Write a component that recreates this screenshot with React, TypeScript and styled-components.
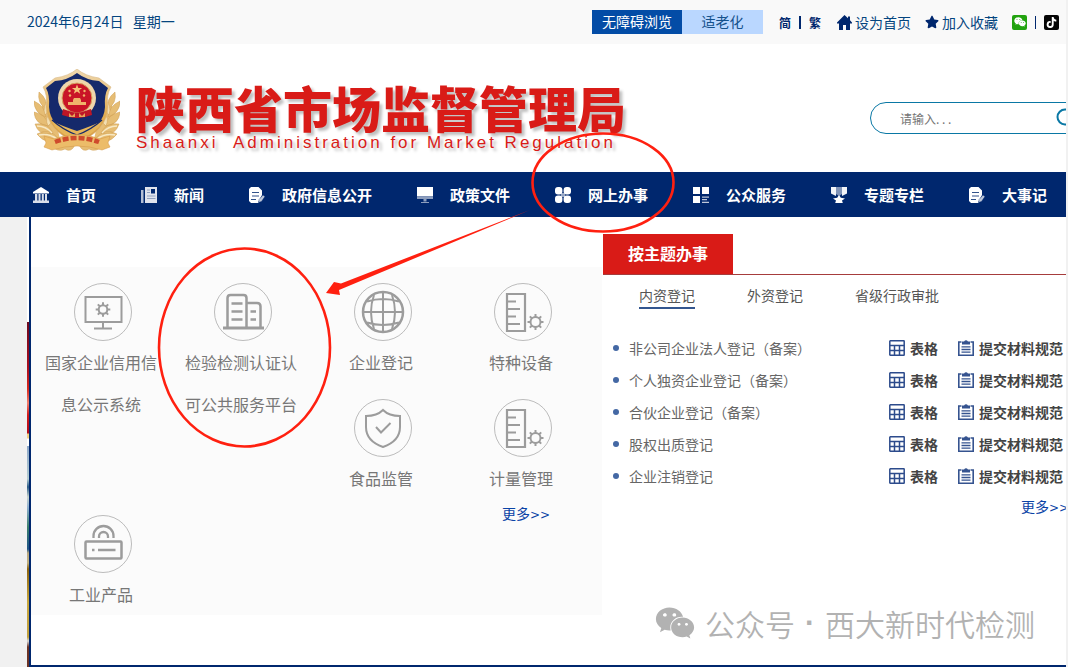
import React from 'react';
import styled, { createGlobalStyle } from 'styled-components';
import { FaStar, FaTiktok, FaWeixin } from 'react-icons/fa';

const navy = '#00276e';
const red = '#d91b17';

const GlobalStyle = createGlobalStyle`
  *, *::before, *::after { box-sizing: border-box; }
  body {
    margin: 0;
    background: #f1f1f1;
    font-family: "Noto Sans CJK SC", "Liberation Sans", sans-serif;
    font-size: 14px;
    color: #666;
  }
  a { color: inherit; text-decoration: none; }
  ul { list-style: none; margin: 0; padding: 0; }
  h1, h2, p { margin: 0; }
  button, input { font-family: inherit; }
  svg { display: block; flex: none; }
`;

const Page = styled.div`
  position: relative;
  margin-right: 2px;
  overflow: hidden;
  background: #fff;
`;

const TopBar = styled.div`
  display: flex;
  align-items: center;
  justify-content: space-between;
  height: 44px;
  padding: 0 7px 0 27px;
  background: #f9f9f9;
  color: #04457f;
  white-space: nowrap;
`;

const DateText = styled.time`
  padding-bottom: 2px;
  white-space: pre;
`;

const Tools = styled.div`
  display: flex;
  align-items: center;
`;

const ModeButton = styled.button<{ $primary?: boolean }>`
  height: 24px;
  padding: 0 0 2px;
  width: ${(p) => (p.$primary ? 90 : 81)}px;
  border: 0;
  font-size: 14px;
  line-height: 22px;
  background: ${(p) => (p.$primary ? '#034ca6' : '#bad7ff')};
  color: ${(p) => (p.$primary ? '#fff' : '#14518c')};
`;

const Script = styled.div`
  display: flex;
  gap: 8px;
  align-items: center;
  margin: 0 16px;
  font-size: 12px;
  font-weight: 700;
  color: ${navy};
`;

const Bar = styled.span<{ $thick?: boolean }>`
  width: ${(p) => (p.$thick ? 2 : 1)}px;
  height: 13px;
  background: ${navy};
`;

const ToolLink = styled.a`
  display: flex;
  align-items: center;
  gap: 3px;
  margin-right: 14px;
`;

const Social = styled.div`
  display: flex;
  align-items: center;
  gap: 8px;
`;

const SocialLink = styled.a<{ $bg: string }>`
  display: flex;
  align-items: center;
  justify-content: center;
  width: 15px;
  height: 15px;
  border-radius: 2px;
  background: ${(p) => p.$bg};
  color: #fff;
`;

const Header = styled.header`
  display: flex;
  justify-content: space-between;
  align-items: flex-start;
  padding: 25px 0 19px 34px;
`;

const Brand = styled.a`
  display: flex;
  align-items: flex-end;
  gap: 16px;
  color: ${red};
  text-shadow: 3px 3px 3px rgba(0, 0, 0, 0.25);
  white-space: nowrap;
`;

const Title = styled.h1`
  font-size: 49px;
  font-weight: 900;
  line-height: 52px;
`;

const Subtitle = styled.p`
  font-family: "Liberation Sans", sans-serif;
  font-size: 17px;
  line-height: 20px;
  letter-spacing: 3px;
  white-space: pre;
`;

const Search = styled.form`
  display: flex;
  align-items: center;
  flex: none;
  width: 230px;
  height: 32px;
  margin: 33px -34px 0 0;
  border: 1px solid #0a78a5;
  border-radius: 16px;
`;

const SearchInput = styled.input`
  flex: 1;
  min-width: 0;
  padding: 0 0 0 29px;
  border: 0;
  outline: 0;
  background: transparent;
  font-size: 12px;
  &::placeholder { color: #757575; opacity: 1; }
`;

const SearchButton = styled.button`
  width: 43px;
  padding: 0;
  border: 0;
  background: transparent;
  color: #0a78a5;
`;

const Nav = styled.nav`
  height: 45px;
  padding-left: 33px;
  background: ${navy};
`;

const NavList = styled.ul`
  display: flex;
  gap: 45px;
`;

const NavLink = styled.a`
  display: flex;
  align-items: center;
  gap: 17px;
  height: 45px;
  color: #fff;
  font-size: 15px;
  font-weight: 700;
  white-space: nowrap;
`;

const Body = styled.div`
  display: flex;
`;

const Gutter = styled.div`
  flex: none;
  width: 27px;
  background: #f1f1f1;
`;

const PhotoEdge = styled.div`
  flex: none;
  width: 2px;
  background: linear-gradient(
    #fff 105px, #6d0a20 105px, #a80f20 150px, #d62a20 172px, #f08070 186px,
    #d01c1c 198px, #b00c1c 216px, #f2cf80 217px, #f2cf80 221px, #fff 222px,
    #fff 229px, #8ea8c8 229px, #b4ccd0 262px, #2c5c88 270px, #c8d4cc 280px,
    #90b0d0 290px, #3c806c 310px, #1f5486 332px, #b8a880 336px, #c0b080 346px,
    #8c6410 352px, #c8a840 385px, #c0a040 420px, #d8d8d8 424px, #6c3426 430px
  );
`;

const Panel = styled.main`
  display: flex;
  flex: 1;
  min-width: 0;
  border-left: 2px solid ${navy};
  border-bottom: 2px solid ${navy};
`;

const Services = styled.section`
  flex: none;
  width: 571px;
  padding: 50px 0;
`;

const ServiceGrid = styled.div`
  display: grid;
  grid-template-columns: repeat(4, 140px);
  grid-auto-rows: 116px;
  background: #fbfbfb;
`;

const Service = styled.a<{ $tall?: boolean }>`
  grid-row: span ${(p) => (p.$tall ? 2 : 1)};
  display: flex;
  flex-direction: column;
  align-items: center;
  padding: 16px 14px 0;
  font-size: 16px;
  line-height: 42px;
  text-align: center;
  color: #777;
`;

const Disc = styled.span`
  display: flex;
  align-items: center;
  justify-content: center;
  width: 58px;
  height: 58px;
  margin-left: 4px;
  border: 1px solid #bcbcbc;
  border-radius: 50%;
  color: #9c9c9c;
`;

const MoreLink = styled.a`
  color: #0a43a6;
  line-height: 28px;
  white-space: nowrap;
`;

const GridMore = styled(MoreLink)`
  grid-column: 4;
  padding-left: 51px;
`;

const Arrows = styled.span`
  font-family: "DejaVu Sans", sans-serif;
  font-size: 12px;
`;

const Topics = styled.section`
  flex: 1;
  min-width: 0;
  padding-top: 17px;
  margin-left: 1px;
`;

const TopicHead = styled.div`
  display: flex;
  border-bottom: 1px solid #a63c3c;
`;

const TopicTitle = styled.h2`
  width: 130px;
  padding-bottom: 2px;
  background: ${red};
  color: #fff;
  font-size: 16px;
  line-height: 38px;
  text-align: center;
`;

const Tabs = styled.div`
  display: flex;
  gap: 52px;
  padding: 10px 36px 23px;
`;

const Tab = styled.button<{ $active?: boolean }>`
  padding: 0 0 2px;
  border: 0;
  border-bottom: 2px solid ${(p) => (p.$active ? '#33568f' : 'transparent')};
  background: transparent;
  color: #555;
  font-size: 14px;
  line-height: 20px;
  white-space: nowrap;
`;

const TopicRow = styled.li`
  display: flex;
  align-items: center;
  height: 32px;
  padding: 0 3px 0 10px;
  white-space: nowrap;
`;

const TopicLink = styled.a`
  display: flex;
  align-items: center;
  gap: 10px;
  flex: 1;
  &::before {
    content: '';
    width: 6px;
    height: 6px;
    border-radius: 50%;
    background: #4468a4;
  }
`;

const FileLink = styled.a`
  display: flex;
  align-items: center;
  gap: 5px;
  margin-left: 20px;
  color: #444;
  font-weight: 700;
`;

const TopicMore = styled.div`
  display: flex;
  justify-content: flex-end;
  margin-right: -3px;
`;

const Watermark = styled.div`
  position: absolute;
  right: 31px;
  bottom: 22px;
  display: flex;
  align-items: center;
  gap: 10px;
  color: #b2b2b2;
  font-size: 30px;
  font-weight: 350;
  line-height: 44px;
  white-space: nowrap;
`;

const Dot = styled.span`
  font-family: "Liberation Sans", sans-serif;
  font-weight: 700;
`;

const Annotation = styled.svg`
  position: absolute;
  left: 0;
  top: 0;
  pointer-events: none;
`;

const Emblem = () => (
  <svg width="86" height="84" viewBox="0 0 86 84" aria-hidden="true">
    <defs>
      <linearGradient id="gold" x1="0" y1="0" x2="0" y2="1">
        <stop offset="0" stopColor="#f0d9b0" />
        <stop offset="0.6" stopColor="#e0ae55" />
        <stop offset="1" stopColor="#d69a45" />
      </linearGradient>
    </defs>
    {[false, true].map((flip) => (
      <g key={String(flip)} transform={flip ? 'translate(86 0) scale(-1 1)' : undefined} fill="#e6bd74" stroke="#cf9f55" strokeWidth=".5">
        <path d="M8 36L18 36L26 70L14 72L6 60z" stroke="none" />
        <path d="M5 23q9 7 7 17q-9-6-7-17zM0 32q11 5 12 16q-12-4-12-16zM0 43q12 2 15 14q-14-1-15-14zM1 55q13-2 18 9q-14 4-18-9zM3 65q12-7 22 5q-13 7-22-5z" />
        <path d="M15 30q4 9-4 16q-3-9 4-16zM17 43q4 9-3 14q-4-8 3-14z" fill="#f3dfb2" />
        <path d="M3 57q9 0 15 7M5 66q10-2 18 4" fill="none" stroke="#f7e8c4" strokeWidth="1.500" />
        <path d="M16 76q10-6 25 0q-4 8-10 4q-7 4-15-4z" />
      </g>
    ))}
    <path d="M43 0q8 7 22 9l12 9q-5 8-3 20q-1 24-31 36q-30-12-31-36q2-12-3-20l12-9q14-2 22-9z" fill="url(#gold)" stroke="#d9b887" strokeWidth=".6" />
    <path d="M43 4q9 7 22 8l9 7q-4 7-3 19q-1 20-28 31q-27-11-28-31q1-12-3-19l9-7q13-1 22-8z" fill="#15296b" />
    <path d="M18 52q10 5 25 10q15-5 25-10l-3 6q-9 9-22 14q-13-5-22-14z" fill="#e6b65a" />
    <path d="M18 51q11 10 25 15q14-5 25-15" fill="none" stroke="#15296b" strokeWidth="1.200" />
    <circle cx="43" cy="29" r="19" fill="#efd6ab" />
    <circle cx="43" cy="29" r="15" fill="#c91427" stroke="#d8a963" />
    <path d="M43 15.500l1.300 3.500h3.800l-3 2.200 1.100 3.600-3.200-2.200-3.200 2.200 1.100-3.600-3-2.200h3.800z" fill="#f5c277" />
    <g fill="#f0b46a">
      <circle cx="35.500" cy="22" r="1.200" /><circle cx="50.500" cy="22" r="1.200" />
      <circle cx="36" cy="26.500" r="1.200" /><circle cx="50" cy="26.500" r="1.200" />
      <path d="M39 31l1-2h6l1 2v2h5v3H34v-3h5z" />
    </g>
    <path d="M29 40l6 2q8 3 16 0l6-2 1 6-7 2q-8 2-16 0l-7-2z" fill="#bd1626" />
    <path d="M35 44l3 3 3-3v4h-6zm10 0l3 3 3-3v4h-6z" fill="#e5a457" />
    <path d="M10 67l10 3q23-9 46 0l10-3-2 7 2 4-8 3q-25-8-50 0l-8-3 2-4z" fill="#ecbc69" stroke="#d39543" strokeWidth=".5" />
    <path d="M21 73q22-8 44 0" fill="none" stroke="#cf4b2c" strokeWidth="4.500" strokeDasharray="6 2" />
  </svg>
);

const NavIcon = ({ name }: { name: string }) => (
  <svg width="16" height="16" viewBox="0 0 16 16" fill="#fff" aria-hidden="true">
    {name === 'home' && (
      <>
        <path d="M8 0l8 5v1.500H0V5z" />
        <path d="M2 7h2.300v7H2zm3.500 0h2v7h-2zm3.300 0h2v7h-2zm3.200 0h2v7h-2zM0 13.500h16V16H0z" opacity=".85" />
      </>
    )}
    {name === 'news' && (
      <>
        <path d="M0 3h2.500v13H0z" opacity=".7" />
        <path d="M4 0h12v16H4z" opacity=".88" />
        <path d="M10 2h4v4.500h-4z" fill={navy} />
        <path d="M6 2.500h3v1H6zm0 2.500h3v1H6zM6 8.500h8.500v1H6zm0 2.500h8.500v1H6z" fill={navy} opacity=".35" />
      </>
    )}
    {name === 'doc' && (
      <>
        <path d="M2 0h7.500L13 3.500V8l-3.500 6.500V16H2L0 14V2z" />
        <path d="M3 5.500h7M3 9h7M2 12.500h5" stroke={navy} opacity=".8" />
        <path d="M9.500 15.500l.5-3L14 8l2 1.500-3.500 5z" opacity=".75" stroke={navy} strokeWidth=".5" />
      </>
    )}
    {name === 'screen' && (
      <>
        <path d="M0 0h16v9.500H0z" />
        <path d="M0 10h16v2H0zm6.500 2h3v2.500h-3zM4 15h8v1H4z" opacity=".55" />
      </>
    )}
    {name === 'clover' && (
      <>
        <rect width="7.400" height="7.400" rx="3" />
        <rect x="8.600" width="7.400" height="7.400" rx="3" />
        <rect y="8.600" width="7.400" height="7.400" rx="3" />
        <rect x="8.600" y="8.600" width="7.400" height="7.400" rx="3" />
        <path d="M6 6h4v4H6z" opacity=".6" />
      </>
    )}
    {name === 'grid' && (
      <>
        <path d="M0 0h7v7H0zm9 0h7v7H9zM0 9h7v7H0z" />
        <path d="M9 9.500h7v1.200H9zm0 2.600h5v1.200H9zm0 2.600h7v1.200H9z" opacity=".75" />
      </>
    )}
    {name === 'award' && (
      <>
        <path d="M0 0h5v9L0 6.500zM11 0h5v6.500L11 9z" opacity=".95" />
        <path d="M5 0h6v7L8 9 5 7z" opacity=".5" />
        <path d="M8 8l1.800 2.800 4.200.7-3 2 .8 2.500H4.200L5 13.500l-3-2 4.200-.7z" />
      </>
    )}
  </svg>
);

const gearTeeth = [0, 45, 90, 135, 180, 225, 270, 315];

const Gear = ({ x, y, r }: { x: number; y: number; r: number }) => (
  <g transform={`translate(${x} ${y})`}>
    <circle r={r} />
    {gearTeeth.map((a) => (
      <path key={a} d={`M0 ${-r}v-3`} transform={`rotate(${a})`} />
    ))}
  </g>
);

const ServiceIcon = ({ name }: { name: string }) => (
  <svg width="56" height="56" viewBox="1 1 56 56" fill="none" stroke="currentColor" strokeWidth="2" aria-hidden="true">
    {name === 'monitor' && (
      <>
        <path d="M11.500 14h36v25h-36zM29 39v6M20 45.500h18" />
        <Gear x={29} y={26.500} r={4.300} />
      </>
    )}
    {name === 'building' && (
      <>
        <path d="M13.500 44V15q0-3 3-3h13q3 0 3 3v29M33 20h10q3.500 0 3.500 3.500V44" strokeWidth="2.500" />
        <path d="M9 45h41" strokeWidth="2.800" />
        <path d="M17.500 20.500h11M17.500 28.500h11M17.500 36.500h11M36.500 28.500h5.500M36.500 36.500h5.500" strokeWidth="2.500" />
      </>
    )}
    {name === 'globe' && (
      <>
        <circle cx="29" cy="29" r="20" strokeWidth="2.500" />
        <path d="M29 9v40M9 29h40M20 12q-6 17 0 34M38 12q6 17 0 34M13 18.500q16-5 32 0M13 39.500q16 5 32 0" />
      </>
    )}
    {name === 'ruler' && (
      <>
        <path d="M13 11h18v37H13zM14 18.500h8M14 26h12M14 33.500h8M14 41h12" strokeWidth="2.200" />
        <Gear x={41.500} y={39} r={5} />
      </>
    )}
    {name === 'shield' && (
      <path d="M29 11q6 6 17 6v11q0 14-17 20q-17-6-17-20V17q11 0 17-6zM22 28l5 5.500 9.500-9.500" />
    )}
    {name === 'router' && (
      <>
        <rect x="11.500" y="26.500" width="36" height="17" rx="1" strokeWidth="2.500" />
        <path d="M18 35h2.500M24 35h17.500M19.500 23v-2a10 10 0 0 1 20 0v2M25 23v-1.500a4.500 4.500 0 0 1 9 0V23" strokeWidth="2.300" />
      </>
    )}
  </svg>
);

const TableIcon = () => (
  <svg width="16" height="16" viewBox="0 0 16 16" fill="none" stroke="#2c4b8c" strokeWidth="1.500" aria-hidden="true">
    <rect x=".8" y=".8" width="14.400" height="14.400" rx=".5" />
    <path d="M1 5.500h14M1 10.500h14M5.500 5.500V15M10.500 5.500V15" />
  </svg>
);

const ClipboardIcon = () => (
  <svg width="16" height="16" viewBox="0 0 16 16" fill="none" stroke="#35538f" strokeWidth="1.600" aria-hidden="true">
    <path d="M3.500 2H.8v13.200h14.400V2h-2.700" />
    <path d="M4 1.500h2Q8-1 10 1.500h2V4.500H4z" fill="#35538f" stroke="none" />
    <path d="M3.500 6.800h9M3.500 9.500h9M3.500 12.200h9" strokeWidth="1.300" />
  </svg>
);

const navItems = [
  ['home', '首页'],
  ['news', '新闻'],
  ['doc', '政府信息公开'],
  ['screen', '政策文件'],
  ['clover', '网上办事'],
  ['grid', '公众服务'],
  ['award', '专题专栏'],
  ['doc', '大事记'],
];

const services = [
  { icon: 'monitor', label: '国家企业信用信息公示系统', tall: true },
  { icon: 'building', label: '检验检测认证认可公共服务平台', tall: true },
  { icon: 'globe', label: '企业登记' },
  { icon: 'ruler', label: '特种设备' },
  { icon: 'shield', label: '食品监管' },
  { icon: 'ruler', label: '计量管理' },
  { icon: 'router', label: '工业产品' },
];

const topics = [
  '非公司企业法人登记（备案）',
  '个人独资企业登记（备案）',
  '合伙企业登记（备案）',
  '股权出质登记',
  '企业注销登记',
];

export default function App() {
  return (
    <>
      <GlobalStyle />
      <Page>
        <TopBar>
          <DateText dateTime="2024-06-24">{'2024年6月24日   星期一'}</DateText>
          <Tools>
            <ModeButton $primary>无障碍浏览</ModeButton>
            <ModeButton>适老化</ModeButton>
            <Script>
              <a href="#simplified">简</a>
              <Bar $thick />
              <a href="#traditional">繁</a>
            </Script>
            <ToolLink href="#home">
              <svg width="15" height="15" viewBox="0 0 15 15" fill={navy} aria-hidden="true">
                <path d="M7.500 0L11 3.300V1.500h2v3.700L15 7.500v1h-2V15H9v-5H6v5H2V8.500H0v-1z" />
              </svg>
              设为首页
            </ToolLink>
            <ToolLink href="#favorite">
              <FaStar size={14} color={navy} />
              加入收藏
            </ToolLink>
            <Social>
              <SocialLink href="#wechat" $bg="#22a30f" aria-label="微信"><FaWeixin size={12} /></SocialLink>
              <Bar />
              <SocialLink href="#douyin" $bg="#050505" aria-label="抖音"><FaTiktok size={11} /></SocialLink>
            </Social>
          </Tools>
        </TopBar>

        <Header>
          <Brand href="#">
            <Emblem />
            <div>
              <Title>陕西省市场监督管理局</Title>
              <Subtitle>{'Shaanxi  Administration for Market Regulation'}</Subtitle>
            </div>
          </Brand>
          <Search role="search">
            <SearchInput type="text" placeholder="请输入. . ." aria-label="搜索" />
            <SearchButton type="button" aria-label="搜索">
              <svg width="20" height="20" viewBox="0 0 20 20" fill="none" stroke="currentColor" strokeWidth="2">
                <circle cx="9" cy="9" r="7.500" />
                <path d="M14 14l5 5" />
              </svg>
            </SearchButton>
          </Search>
        </Header>

        <Nav>
          <NavList>
            {navItems.map(([icon, label]) => (
              <li key={label}>
                <NavLink href="#">
                  <NavIcon name={icon} />
                  {label}
                </NavLink>
              </li>
            ))}
          </NavList>
        </Nav>

        <Body>
          <Gutter />
          <PhotoEdge />
          <Panel>
            <Services>
              <ServiceGrid>
                {services.map((s) => (
                  <Service key={s.label} href="#" $tall={s.tall}>
                    <Disc><ServiceIcon name={s.icon} /></Disc>
                    {s.label}
                  </Service>
                ))}
                <GridMore href="#">更多<Arrows>&gt;&gt;</Arrows></GridMore>
              </ServiceGrid>
            </Services>

            <Topics>
              <TopicHead>
                <TopicTitle>按主题办事</TopicTitle>
              </TopicHead>
              <Tabs>
                <Tab $active>内资登记</Tab>
                <Tab>外资登记</Tab>
                <Tab>省级行政审批</Tab>
              </Tabs>
              <ul>
                {topics.map((t) => (
                  <TopicRow key={t}>
                    <TopicLink href="#">{t}</TopicLink>
                    <FileLink href="#"><TableIcon />表格</FileLink>
                    <FileLink href="#"><ClipboardIcon />提交材料规范</FileLink>
                  </TopicRow>
                ))}
              </ul>
              <TopicMore>
                <MoreLink href="#">更多<Arrows>&gt;&gt;</Arrows></MoreLink>
              </TopicMore>
            </Topics>
          </Panel>
        </Body>

        <Watermark>
          <FaWeixin size={40} />
          <span>公众号</span>
          <Dot>·</Dot>
          <span>西大新时代检测</span>
        </Watermark>

        <Annotation width="700" height="460" viewBox="0 0 700 460" fill="none" stroke="#ff2010" strokeWidth="2.600" aria-hidden="true">
          <ellipse cx="603" cy="182.500" rx="70.500" ry="49" />
          <ellipse cx="244.500" cy="347.500" rx="85.500" ry="99" />
          <path d="M530 210L341 283.500L334 282L326 293L340 295L339 290L345 287.500Z" fill="#ff2010" stroke="none" />
        </Annotation>
      </Page>
    </>
  );
}
